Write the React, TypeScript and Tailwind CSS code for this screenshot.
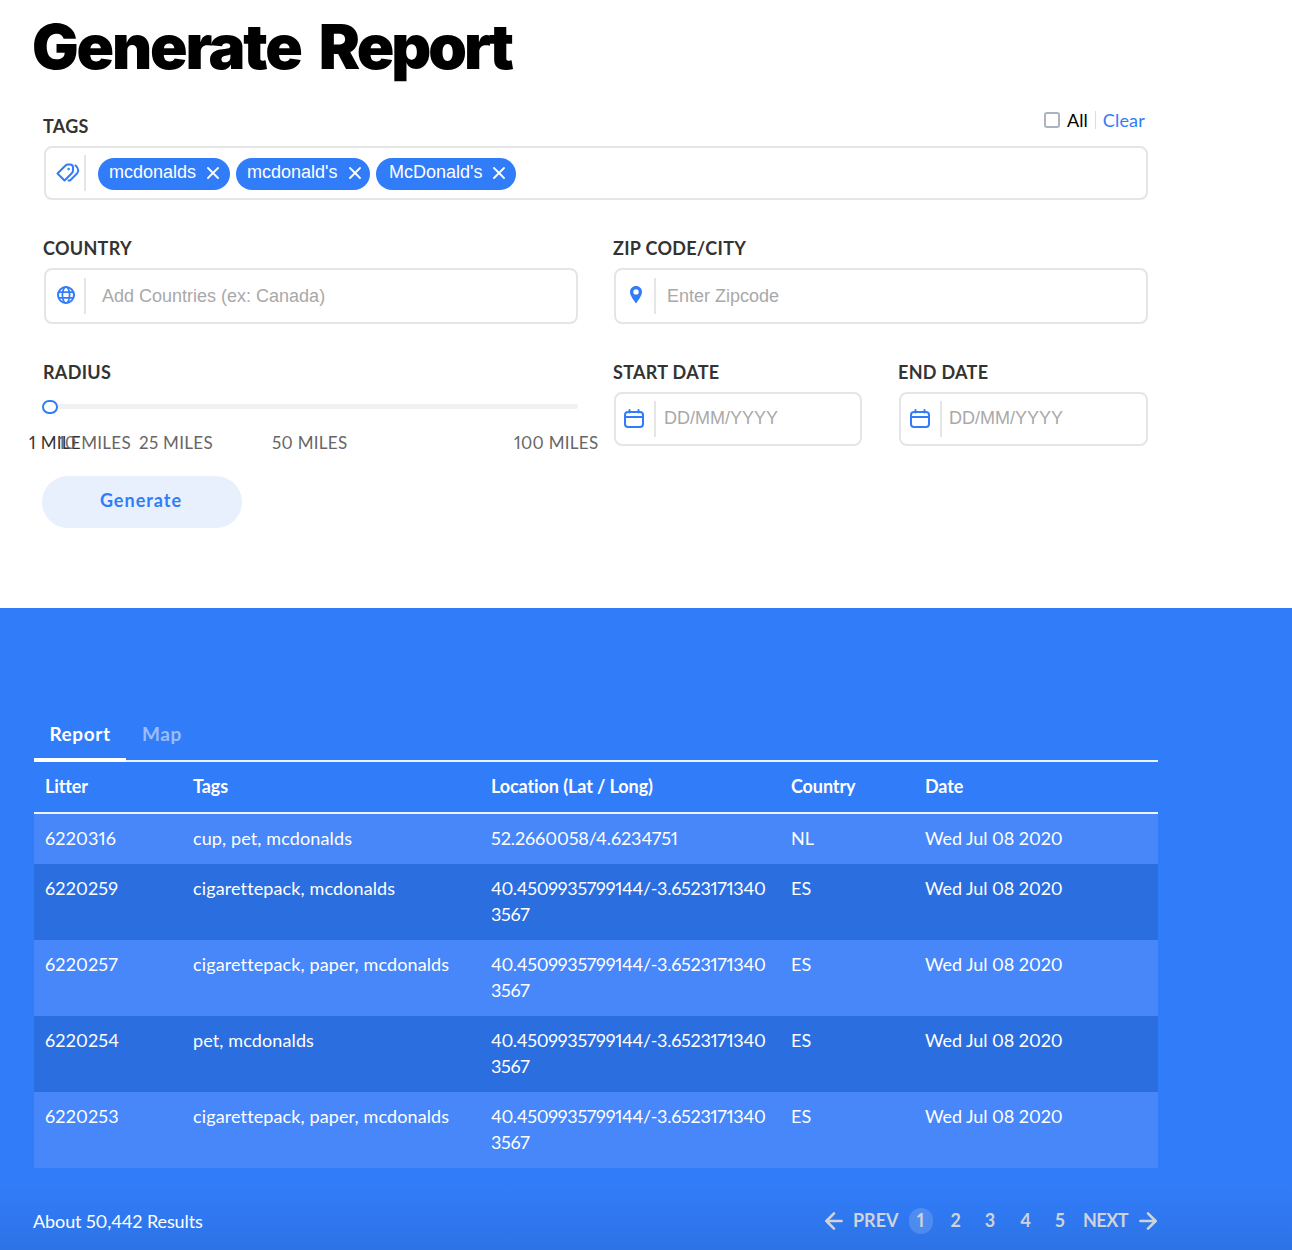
import React from "react";
import { ArrowLeft, ArrowRight, X } from "lucide-react";

const rows = [
  { id: "6220316", tags: "cup, pet, mcdonalds", loc: "52.2660058/4.6234751", country: "NL" },
  { id: "6220259", tags: "cigarettepack, mcdonalds", loc: "40.4509935799144/-3.65231713403567", country: "ES" },
  { id: "6220257", tags: "cigarettepack, paper, mcdonalds", loc: "40.4509935799144/-3.65231713403567", country: "ES" },
  { id: "6220254", tags: "pet, mcdonalds", loc: "40.4509935799144/-3.65231713403567", country: "ES" },
  { id: "6220253", tags: "cigarettepack, paper, mcdonalds", loc: "40.4509935799144/-3.65231713403567", country: "ES" },
];

const marks = [
  { label: "1 MILE", className: "left-[29px] text-[#333]" },
  { label: "10 MILES", className: "left-[58px] text-[#666]" },
  { label: "25 MILES", className: "left-[139px] text-[#666]" },
  { label: "50 MILES", className: "left-[272px] text-[#666]" },
  { label: "100 MILES", className: "left-[514px] text-[#666]" },
];

function TagsIcon() {
  return (
    <svg width="24" height="20" viewBox="0 0 24 20" fill="none" stroke="#317cf9" strokeWidth="2" strokeLinejoin="round" strokeLinecap="round">
      <path d="M1.5 10.5 L9.5 2.5 Q10.5 1.5 12 1.5 H14 Q17 1.5 17 4.5 V7.5 Q17 9 16 10 L8.5 17.5 Z" />
      <path d="M19.5 2.5 Q23 5.5 22 8.5 Q21.5 10 20.5 11 L14 17.5 H12.5" />
      <circle cx="12.5" cy="6" r="0.8" fill="#317cf9" strokeWidth="1" />
    </svg>
  );
}

function GlobeIcon() {
  return (
    <svg width="18" height="18" viewBox="0 0 18 18" fill="none" stroke="#317cf9" strokeWidth="2" className="mb-[3px]">
      <circle cx="9" cy="9" r="8" />
      <ellipse cx="9" cy="9" rx="3.6" ry="8" strokeWidth="1.7" />
      <path d="M1.5 6.2 H16.5 M1.5 11.8 H16.5" strokeWidth="1.7" />
    </svg>
  );
}

function CalendarIcon() {
  return (
    <svg width="20" height="19" viewBox="0 0 20 19" fill="none" stroke="#317cf9" strokeWidth="2" strokeLinecap="round" className="mb-[2px]">
      <rect x="1" y="3" width="18" height="15" rx="3" />
      <path d="M1.5 8 H18.5 M5.5 1 V3.5 M14.5 1 V3.5" />
    </svg>
  );
}

function PinIcon() {
  return (
    <svg width="12" height="18" viewBox="0 0 12 18" className="mb-[2px]">
      <path
        fillRule="evenodd"
        fill="#317cf9"
        d="M6 0C2.7 0 0 2.6 0 5.9 0 9.8 4.2 14.6 6 17.5 7.8 14.6 12 9.8 12 5.9 12 2.6 9.3 0 6 0ZM6 3.2A2.7 2.7 0 1 1 6 8.6 2.7 2.7 0 0 1 6 3.2Z"
      />
    </svg>
  );
}

function Label({ children }: { children: React.ReactNode }) {
  return <div className="text-[18px] leading-[22px] font-bold text-[#333] tracking-[0.3px]">{children}</div>;
}

function Chip({ text, className }: { text: string; className: string }) {
  return (
    <div className={`flex items-center h-8 rounded-full bg-[#317cf9] text-white text-[18px] ${className}`}>
      <span className="-mt-[4px]">{text}</span>
      <X size={20} strokeWidth={2.2} className="ml-auto -mt-[3px]" />
    </div>
  );
}

function Field({ icon, iconBox, placeholder, className, textClass = "" }: { icon: React.ReactNode; iconBox: string; placeholder: string; className: string; textClass?: string }) {
  return (
    <div className={`flex items-center rounded-lg border-2 border-[#e5e5e5] bg-white ${className}`}>
      <div className={`flex items-center justify-center h-9 border-r-2 border-[#e5e5e5] shrink-0 ${iconBox}`}>{icon}</div>
      <span className={`text-[18px] text-[#a9a9a9] ${textClass}`}>{placeholder}</span>
    </div>
  );
}

export default function App() {
  return (
    <div className="w-[1292px] h-[1250px] overflow-hidden bg-white font-['Lato',sans-serif] proportional-nums">
      <div className="h-[608px] pt-[9px]">
        <h1 className="ml-[32px] text-[62px] leading-[76px] font-black text-black tracking-[-2.2px] [word-spacing:8px] font-['Inter',sans-serif]">
          Generate <span className="tracking-[-3px]">Report</span>
        </h1>

        <div className="ml-[43px] mt-[20px] w-[1105px] font-['Lato',sans-serif]">
          <div className="flex justify-between items-end h-[42px] pb-[9px] -mt-[1px]">
            <Label>TAGS</Label>
            <div className="flex items-center mb-[7px] text-[18px] leading-[20px]">
              <div className="w-4 h-4 rounded-[3px] border-2 border-[#adb3bc]" />
              <span className="ml-[7px] text-black">All</span>
              <div className="w-px h-[18px] bg-[#ddd] mx-[7px]" />
              <span className="text-[#317cf9] mr-[3px] tracking-[0.2px]">Clear</span>
            </div>
          </div>
          <div className="ml-px flex items-center h-[54px] rounded-lg border-2 border-[#e5e5e5]">
            <div className="flex items-center justify-center w-10 h-9 border-r-2 border-[#e5e5e5] shrink-0 pl-[6px]">
              <TagsIcon />
            </div>
            <div className="flex gap-[6px] ml-[12px] mt-[2px] font-['Liberation_Sans',sans-serif]">
              <Chip text="mcdonalds" className="w-[132px] pl-[11px] pr-[7px]" />
              <Chip text="mcdonald's" className="w-[134px] pl-[11px] pr-[5px]" />
              <Chip text="McDonald's" className="w-[140px] pl-[13px] pr-[7px]" />
            </div>
          </div>

          <div className="flex mt-[37px]">
            <div className="w-[570px]">
              <Label>COUNTRY</Label>
              <Field
                className="ml-px mt-[9px] h-[56px] w-[534px] font-['Liberation_Sans',sans-serif]"
                iconBox="w-10 mr-[16px] pl-[2px]"
                icon={<GlobeIcon />}
                placeholder="Add Countries (ex: Canada)"
              />
            </div>
            <div className="w-[535px]">
              <Label>ZIP CODE/CITY</Label>
              <Field
                className="ml-px mt-[9px] h-[56px] w-[534px] font-['Liberation_Sans',sans-serif]"
                iconBox="w-10 mr-[11px] pl-[2px]"
                icon={<PinIcon />}
                placeholder="Enter Zipcode"
              />
            </div>
          </div>

          <div className="flex mt-[37px]">
            <div className="w-[570px]">
              <Label>RADIUS</Label>
            </div>
            <div className="w-[285px]">
              <Label>START DATE</Label>
              <Field
                className="ml-px mt-[9px] h-[54px] w-[248px] font-['Liberation_Sans',sans-serif]"
                iconBox="w-10 mr-[8px] pr-[2px]"
                icon={<CalendarIcon />}
                placeholder="DD/MM/YYYY"
                textClass="-mt-[2px]"
              />
            </div>
            <div className="w-[250px]">
              <Label>END DATE</Label>
              <Field
                className="ml-px mt-[9px] h-[54px] w-[249px] font-['Liberation_Sans',sans-serif]"
                iconBox="w-[41px] mr-[7px] pr-[2px]"
                icon={<CalendarIcon />}
                placeholder="DD/MM/YYYY"
                textClass="-mt-[2px]"
              />
            </div>
          </div>

          <div className="relative -ml-[43px] h-0">
            <div className="absolute left-[42px] top-[-42px] w-[536px] h-[5px] bg-[#f1f1f1] rounded-full" />
            <div className="absolute left-[42px] top-[-46px] w-4 h-[14px] rounded-full border-[2.5px] border-[#317cf9] bg-white" />
            {marks.map((m) => (
              <span key={m.label} className={`absolute top-[-13px] text-[17px] leading-[20px] tracking-[0.3px] whitespace-nowrap ${m.className}`}>
                {m.label}
              </span>
            ))}
          </div>

          <button className="-ml-px mt-[30px] block w-[200px] h-[52px] rounded-[26px] bg-[#e8f0fe] text-[#317cf9] text-[18px] font-bold tracking-[1px] pb-[3px] pr-[2px]">
            Generate
          </button>
        </div>
      </div>

      <div className="h-[642px] bg-gradient-to-b from-[#317cf9] from-[90%] to-[#2d73e6] pt-[102px] text-white">
        <div className="ml-[34px] w-[1124px]">
          <div className="flex h-[52px] border-b-2 border-white/90 text-[19px] font-bold tracking-[0.6px]">
            <div className="w-[92px] text-center pt-[10px] h-[52px] border-b-[4px] border-white">Report</div>
            <div className="ml-4 pt-[10px] text-white/50">Map</div>
          </div>
          <table className="w-[1124px] table-fixed text-[18px] leading-[26px] border-collapse">
            <thead>
              <tr className="h-[51px] border-b-2 border-white/90 text-left tracking-[-0.1px]">
                <th className="w-[148px] px-[11px] pb-[2px] font-bold">Litter</th>
                <th className="w-[298px] px-[11px] pb-[2px] font-bold">Tags</th>
                <th className="w-[300px] px-[11px] pb-[2px] font-bold">Location (Lat / Long)</th>
                <th className="w-[134px] px-[11px] pb-[2px] font-bold">Country</th>
                <th className="w-[244px] px-[11px] pb-[2px] font-bold">Date</th>
              </tr>
            </thead>
            <tbody>
              {rows.map((r, i) => (
                <tr key={r.id} className={i % 2 === 0 ? "bg-[#4787f9]" : "bg-[#2b6ee0]"}>
                  <td className="align-top px-[11px] pt-[11px] pb-[13px] tracking-[0.15px]">{r.id}</td>
                  <td className="align-top px-[11px] pt-[11px] pb-[13px] tracking-[0.12px]">{r.tags}</td>
                  <td className={`align-top px-[11px] pt-[11px] pb-[13px] break-all ${i === 0 ? "tracking-[-0.1px]" : "tracking-[-0.3px]"}`}>{r.loc}</td>
                  <td className="align-top px-[11px] pt-[11px] pb-[13px]">{r.country}</td>
                  <td className="align-top px-[11px] pt-[11px] pb-[13px] tracking-[-0.07px]">Wed Jul 08 2020</td>
                </tr>
              ))}
            </tbody>
          </table>
          <div className="flex items-center justify-between mt-[39px] -ml-px">
            <span className="text-[18px] leading-[24px] tracking-[-0.1px]">About 50,442 Results</span>
            <div className="flex items-center text-[18px] font-bold text-[#cfd3da] -mr-[3px]">
              <ArrowLeft size={26} strokeWidth={2.4} />
              <span className="ml-[6px]">PREV</span>
              <span className="ml-[10px] w-6 h-[26px] rounded-full bg-white/15 flex items-center justify-center">1</span>
              <span className="ml-[18px]">2</span>
              <span className="ml-[24px]">3</span>
              <span className="ml-[25px]">4</span>
              <span className="ml-[24px]">5</span>
              <span className="ml-[18px] tracking-[-0.5px]">NEXT</span>
              <ArrowRight size={26} strokeWidth={2.4} className="ml-[7px]" />
            </div>
          </div>
        </div>
      </div>
    </div>
  );
}
